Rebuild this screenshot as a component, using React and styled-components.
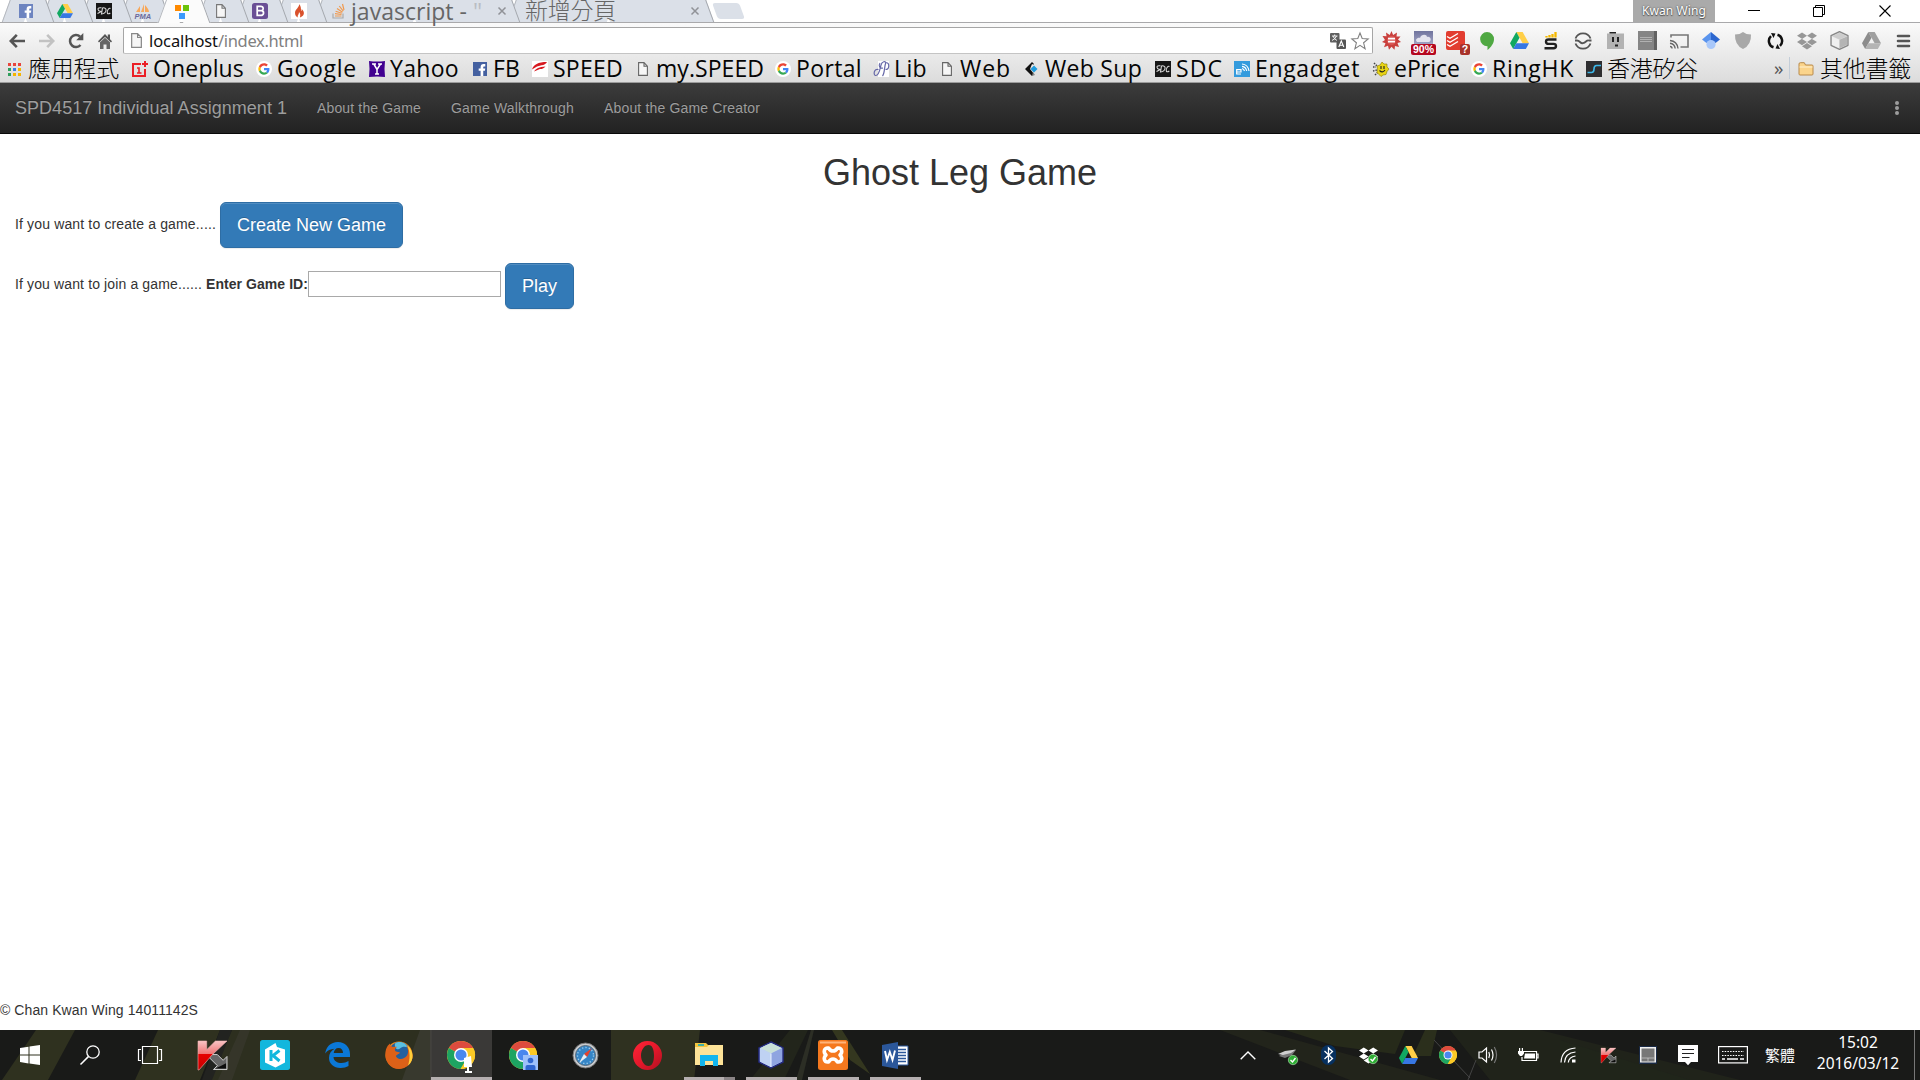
import React, { useLayoutEffect, useRef } from "react";
import styled, { createGlobalStyle, css } from "styled-components";
import { FaDropbox } from "react-icons/fa";

const UI = `"Noto Sans", "Noto Sans CJK TC", sans-serif`;
const LIGHT_UI = `"Open Sans", "Noto Sans CJK TC", sans-serif`;
const ARIAL = `"Liberation Sans", Arial, sans-serif`;

const GlobalStyle = createGlobalStyle`
  * { box-sizing: border-box; }
  html, body { margin: 0; padding: 0; background: #fff; overflow: hidden; }
  svg { display: block; flex: none; overflow: visible; }
`;

/* ---------- text spaced to a known width ---------- */

const FitSpan = styled.span`
  display: block;
  flex: none;
  white-space: pre;
`;

function Fit({ width, children, className }) {
  const ref = useRef(null);
  useLayoutEffect(() => {
    const el = ref.current;
    el.style.width = "max-content";
    el.style.letterSpacing = "0px";
    const natural = el.getBoundingClientRect().width;
    el.style.letterSpacing = `${(width - natural) / Array.from(children).length}px`;
    el.style.width = `${width}px`;
  }, [width, children]);
  return <FitSpan ref={ref} className={className}>{children}</FitSpan>;
}

/* ---------- icons ---------- */

const Svg = ({ w = 16, h = w, vb = `0 0 ${w} ${h}`, children, ...rest }) => (
  <svg width={w} height={h} viewBox={vb} fill="none" {...rest}>{children}</svg>
);

const Drive = ({ w = 16, h = 14, colors = ["#ffcf48", "#11a861", "#3777e3"] }) => (
  <Svg w={w} h={h} vb="0 0 48 42" preserveAspectRatio="none">
    <path d="M16 0h16l16 28H32z" fill={colors[0]} />
    <path d="M16 0L0 28l8 14 16-28z" fill={colors[1]} />
    <path d="M16 28h32l-8 14H8z" fill={colors[2]} />
  </Svg>
);

const Facebook = ({ fill = "#4460a0", size = 14 }) => (
  <Svg w={size} vb="0 0 16 16">
    <rect width="16" height="16" fill={fill} />
    <path d="M8.700 16V10H6.500V7.400h2.200V6c0-2.400 1.200-3.600 3.400-3.600H14V5h-1.200C12 5 11.700 5.400 11.700 6v1.400H14L13.600 10h-1.900v6z" fill="#fff" />
  </Svg>
);

const Sdc = ({ w = 16 }) => (
  <Svg w={w} vb="0 0 16 16">
    <rect width="16" height="16" fill="#161616" />
    <path d="M5.500 4.800Q1.800 4.300 2 6.300t2.300 1.900-2.800 2.400M6.500 4.800L5.500 11q4-.5 4.500-3.500t-3.500-2.700M14.500 5.500c-2-1.500-4 3.500-3 5 1 .8 2.800-.5 2.800-.5" stroke="#d8d8d8" strokeWidth="1.100" />
  </Svg>
);

const Pma = () => (
  <Svg w={18} h={16}>
    <path d="M7 9L10 1v8zM2 9l4-6v6zM11 2c2 2 4 5 4 7h-4z" fill="#f7a85b" />
    <text x="0.500" y="15.500" fontFamily={ARIAL} fontSize="7.500" fontWeight="700" fontStyle="italic" fill="#6b6a9b">PMA</text>
  </Svg>
);

const Tiles = () => (
  <Svg w={14} h={14}>
    <path d="M0 0h6v6H0z" fill="#ff8a00" />
    <path d="M8 0h6v6H8z" fill="#6cc30c" />
    <path d="M4 8h6v6H4z" fill="#3b99fc" />
  </Svg>
);

const Doc = ({ stroke = "#666", w = 10, h = 14 }) => (
  <Svg w={w} h={h} vb="0 0 10 14" preserveAspectRatio="none">
    <path d="M.6.6h5.400L9.400 4.200v9.200H.6zM6 .6v3.600h3.400" stroke={stroke} strokeWidth="1.100" fill="#f6f6f6" />
  </Svg>
);

const BootstrapIcon = () => (
  <Svg w={16}>
    <rect width="16" height="16" rx="2.500" fill="#6a4f95" />
    <path d="M5.200 3.400h3.600c3 0 3 3.500 1 4.200 2.600.8 2.400 4.800-1.200 4.800H5.200zM5.800 7.700h3" stroke="#fff" strokeWidth="1.700" />
  </Svg>
);

const Flame = () => (
  <Svg w={16}>
    <rect width="16" height="16" fill="#fff" />
    <path d="M8 1c1 3-4 5-4 9 0 3 2 4 3 4.500C6 12 8 12 8 9c2 2 1 4 1 5.500 6-2 4-7 1.500-8.500.5 1 0 2-.5 2C10 5 10 3 8 1z" fill="#d9512c" />
  </Svg>
);

const Stack = () => (
  <Svg w={13} h={15}>
    <path d="M1 9.500V14h10V9.500" stroke="#aaa" strokeWidth="1.200" />
    <path d="M3 12h6.500M3 9.700l6.500.8M3.600 7.200l6.200 2M5 4.500l5.500 3.700M7.300 2l4 5.200M10.500 0l1.500 6" stroke="#f09a50" strokeWidth="1.200" />
  </Svg>
);

const Apps = () => {
  const colors = ["#e8453c", "#e8453c", "#e8453c", "#2f9e5b", "#3b7de8", "#f5b400", "#2f9e5b", "#f5b400", "#f5b400"];
  return (
    <Svg w={13}>
      {colors.map((c, i) => <rect key={i} x={(i % 3) * 5} y={Math.floor(i / 3) * 5} width="3" height="3" fill={c} />)}
    </Svg>
  );
};

const OneplusIcon = () => (
  <Svg w={16}>
    <path d="M9 3H1v12h12V8M13 0v6M10 3h6" stroke="#eb1f25" strokeWidth="2" />
    <path d="M5 7h2v5M5 12h4.500" stroke="#eb1f25" strokeWidth="1.600" />
  </Svg>
);

const GoogleG = () => (
  <Svg w={16} vb="0 0 48 48">
    <circle cx="24" cy="24" r="24" fill="#fff" />
    <g transform="translate(7 7) scale(.71)">
      <path fill="#EA4335" d="M24 9.500c3.540 0 6.710 1.220 9.210 3.600l6.850-6.850C35.900 2.380 30.470 0 24 0 14.620 0 6.510 5.380 2.560 13.220l7.980 6.190C12.430 13.720 17.740 9.500 24 9.500z" />
      <path fill="#4285F4" d="M46.980 24.550c0-1.570-.15-3.090-.38-4.550H24v9.020h12.940c-.58 2.960-2.260 5.480-4.780 7.180l7.730 6c4.510-4.180 7.090-10.360 7.090-17.650z" />
      <path fill="#FBBC05" d="M10.530 28.590A14.500 14.500 0 0 1 9.770 24c0-1.600.27-3.140.76-4.590l-7.980-6.190A24 24 0 0 0 0 24c0 3.880.92 7.540 2.560 10.780z" />
      <path fill="#34A853" d="M24 48c6.480 0 11.930-2.130 15.890-5.810l-7.730-6c-2.150 1.450-4.920 2.300-8.160 2.300-6.260 0-11.570-4.220-13.470-9.910l-7.980 6.190C6.510 42.620 14.620 48 24 48z" />
    </g>
  </Svg>
);

const YahooIcon = () => (
  <Svg w={16}>
    <path d="M0 0q8 1 16 0-1 8 0 16-8-1-16 0 1-8 0-16z" fill="#400090" />
    <path d="M3 3h4M9 3h4M4.800 3L8 8.500 11.500 3M8 8v5M6 13h4" stroke="#fff" strokeWidth="1.500" />
  </Svg>
);

const SpeedIcon = () => (
  <Svg w={16}>
    <rect width="16" height="16" fill="#fff" />
    <path d="M0 8.500C1.500 3.500 6 1 15 1c-1 2-3 3-5.500 3.300L5 5.500zM2 10.500c2-3 5-4.500 11.500-5-2 2-3 2.500-5.500 2.500z" fill="#d71920" />
  </Svg>
);

const LibIcon = () => (
  <Svg w={16}>
    <rect x="5" width="11" height="16" fill="#fff" />
    <path d="M5.500 8.500C1 7 0 14 2.500 14.500 6 15 7 8 8 4c1-4 4.500-4 5-2M9.500 15c2.500-3 1.500-9 3.500-14M7 2c-2 3 0 6 3 5M12.500 8.500c4 0 4.500-6.500.5-7" stroke="#6668a8" strokeWidth="1.200" />
  </Svg>
);

const WebSupIcon = () => (
  <Svg w={14} h={16}>
    <path d="M7 1L0 8l7 7 2-2-4-5 4-5z" fill="#111" />
    <path d="M7 15l3-1-2-3z" fill="#888" />
    <path d="M9 4.500L12.500 8 9 11.500 5.500 8z" fill="#1f9de0" />
    <path d="M9 4L5 8l2-5z" fill="#eee" />
  </Svg>
);

const EngadgetIcon = () => (
  <Svg w={16}>
    <rect width="16" height="16" fill="#349bdd" />
    <path d="M2.500 11H7V8.700H2.700V13H7M8 7.500q2 .3 2.500 2.500M8 5.300q4 .5 4.700 4.700M8 3q6 .5 7 7" stroke="#fff" strokeWidth="1.200" />
  </Svg>
);

const EpriceIcon = () => (
  <Svg w={16}>
    <path d="M1 2l4 4M0 6h3M0 10l4-1M2 14l3-3" stroke="#444" strokeWidth="1.500" strokeDasharray="1.500 1" />
    <path d="M9 1l2 2 3 0 0 3 2 2-2 2.500-1 3-3 .5-2 1.500-2-2-2-2 .5-3L4 5l3-1z" fill="#e8d414" stroke="#8a7a00" strokeWidth=".6" />
    <path d="M8 5v3M11 5v3M6.500 9.500q3 3 5.500-.5" stroke="#222" strokeWidth="1.100" />
  </Svg>
);

const RingIcon = () => (
  <Svg w={16}>
    <rect width="16" height="16" fill="#2e2e30" />
    <path d="M1.500 11.500h4Q8 11.500 8 8t2.500-3.500H15" stroke="#3db7e8" strokeWidth="1.600" />
  </Svg>
);

const FolderIcon = () => (
  <Svg w={16} h={14}>
    <path d="M1 12V2q0-1.300 1.300-1.300h4L7.500 3H14q1 0 1 1v8q0 1-1 1H2q-1 0-1-1z" fill="#fbd48b" stroke="#b98a4a" />
    <path d="M1.500 5h13" stroke="#fff0cf" />
  </Svg>
);

const BackIcon = ({ color }) => (
  <Svg w={16} h={14}><path d="M7.800.8L1.800 7l6 6.200M2 7h14" stroke={color} strokeWidth="2.600" /></Svg>
);
const ForwardIcon = ({ color }) => (
  <Svg w={16} h={14}><path d="M8.200.8l6 6.200-6 6.200M14 7H0" stroke={color} strokeWidth="2.600" /></Svg>
);
const ReloadIcon = () => (
  <Svg w={16}>
    <path d="M12.500 12A6 6 0 1 1 12 3.500" stroke="#555" strokeWidth="2.500" />
    <path d="M15.300 0v7.200H8.200z" fill="#555" />
  </Svg>
);
const HomeIcon = () => (
  <Svg w={14} h={16}>
    <path d="M7 1L0 8.300l1 1.200L7 4l6 5.500 1-1.200-2-2V1.500H9.800V4z" fill="#555" />
    <path d="M2 9.300l5-4.600 5 4.600V16H8.500v-4.500h-3V16H2z" fill="#666" />
  </Svg>
);

const Translate = () => (
  <Svg w={16}>
    <rect width="9.500" height="9.500" rx="1" fill="#606060" />
    <rect x="6.500" y="6.500" width="9.500" height="9.500" rx="1" fill="#555" />
    <path d="M2 3h5.500M4.700 1.500V3M6.500 3q-1 3-4.500 4.500M3 3q1 3 4 4.500" stroke="#fff" strokeWidth=".9" />
    <path d="M8.800 14l2.500-6 2.500 6M9.500 12.300h3.600" stroke="#fff" strokeWidth="1.100" />
  </Svg>
);
const StarIcon = () => (
  <Svg w={18}>
    <path d="M9 1l2.200 5.500 6 .4-4.600 3.900 1.500 5.900L9 13.400l-5.100 3.300 1.500-5.900L.8 6.900l6-.4z" stroke="#808080" strokeWidth="1.100" fill="#fff" />
  </Svg>
);
const Burst = () => (
  <Svg w={19}>
    <path d="M9.500 0l1.600 4L15 1.500l-.5 4 4 0-2.500 3L19 11l-3.500 1 1.500 4-4-1-.5 3.800-3-3-2.500 3-1-4-4 1.500 1.500-4L0 11l3-2L.5 5l4 .3L4 1.500 7.700 4z" fill="#c9403d" />
    <circle cx="9.500" cy="9.500" r="4.500" fill="#d95754" />
    <path d="M6 7.700h7M6 10.700h7" stroke="#fff" strokeWidth="1.700" />
  </Svg>
);
const Cloud = () => (
  <Svg w={19}>
    <defs><linearGradient id="sky" x2="0" y2="1"><stop stopColor="#70749e" /><stop offset="1" stopColor="#b6b8d2" /></linearGradient></defs>
    <rect width="19" height="19" fill="url(#sky)" />
    <path d="M3 11c-3-3 2-5 3-4 1-4 7-4 7-1 4-1 5 4 2 5z" fill="#e4e4ee" />
  </Svg>
);
const Todoist = () => (
  <Svg w={19}>
    <rect width="19" height="19" rx="2" fill="#e23d30" />
    <path d="M1 5.500l3 1.800L12 2.500M1 9.500l3 1.800L12 6.500M1 13.500l3 1.800 8-4.800" stroke="#fff" strokeWidth="1.400" />
  </Svg>
);
const Hangouts = () => (
  <Svg w={14} h={18}><path d="M7 0a7 7 0 0 1 7 7.300c0 4-3 8-6.500 10.700v-3.800A7 7 0 0 1 7 0z" fill="#4fa842" /></Svg>
);
const SIcon = () => (
  <Svg w={14} h={18}>
    <path d="M12.500 7.500H4.500q-2.500 0-2.500 2.200t2.500 2.200h5q2.500 0 2.500 2.200t-2.500 2.200H.5" stroke="#222" strokeWidth="2.400" />
    <path d="M2.500 5.500V4M5.500 5.500V3M8.500 5.500V2M11.500 5.500V0" stroke="#f5b800" strokeWidth="2.300" />
  </Svg>
);
const WaveCircle = () => (
  <Svg w={18}>
    <path d="M1.500 6.500A8 8 0 0 1 16.500 6.500M1.500 11.500A8 8 0 0 0 16.500 11.500" stroke="#555" strokeWidth="1.800" />
    <path d="M1 8.500h2q1.500 0 3 1.500t3 1.200 3-1.700 3-1h2.500" stroke="#555" strokeWidth="1.800" />
  </Svg>
);
const Face = () => (
  <Svg w={17}>
    <rect y="1.500" width="17" height="15.500" fill="#b2b2b2" />
    <path d="M2.500 1.500V0H9v1.500M5 5h2v5H5zM10 5h2v5h-2zM8 12.500h3v2H8z" fill="#222" />
  </Svg>
);
const GreyKeys = () => (
  <Svg w={19}>
    <rect width="19" height="19" fill="#858585" />
    <rect x="16" width="3" height="19" fill="#626262" />
    <path d="M2.500 6.500h11M2.500 8.500h11M2.500 10.500h11" stroke="#ddd" strokeWidth="1.100" strokeDasharray="1 1" />
  </Svg>
);
const Cast = () => (
  <Svg w={19} h={16}>
    <path d="M1 4.500V2h17v12h-7.500" stroke="#757575" strokeWidth="1.600" />
    <path d="M0 7.500q7 .5 8 8M0 10.300q4.500.5 5.200 5.200M0 13.500q2 0 2 2" stroke="#666" strokeWidth="1.400" />
  </Svg>
);
const Scholar = () => (
  <Svg w={18}>
    <path d="M9 0L0 7.500 4.500 11 9 8.500z" fill="#5a94ee" />
    <path d="M9 0l9 7.500-4.500 3.500L9 8.500z" fill="#2d67cf" />
    <circle cx="9" cy="12.500" r="4.600" fill="#a9c8fa" />
  </Svg>
);
const Shield = () => (
  <Svg w={16} h={17}><path d="M8 0q3 2.500 8 2.500Q16.500 13 8 17-.5 13 0 2.500 5 2.500 8 0z" fill="#a8a8a8" /></Svg>
);
const Sync = () => (
  <Svg w={17} h={18}>
    <path d="M6.500 15.300A6.600 6.600 0 0 1 4 4.200M10.500 2.700A6.600 6.600 0 0 1 13 13.800" stroke="#111" strokeWidth="2.500" />
    <path d="M4 1l4.500.5L6.500 6zM13 17l-4.500-.5L10.500 12z" fill="#111" />
  </Svg>
);
const Cube = () => (
  <Svg w={19} h={19}>
    <path d="M9.500.7l8.500 4v9.600l-8.500 4-8.500-4V4.700z" fill="#ddd" stroke="#868686" strokeWidth="1.300" strokeLinejoin="round" />
    <path d="M9.500 8.800L2 5.500v8.300l7.500 3.400z" fill="#f0f0f0" />
    <path d="M9.500 8.800L17 5.500v8.300l-7.500 3.400z" fill="#b4b4b4" />
    <path d="M9.500 1.800L2.500 5.200l7 3.200 7-3.200z" fill="#cdcdcd" />
  </Svg>
);
const MenuIcon = () => (
  <Svg w={13} h={14}><path d="M1 2h11M1 7h11M1 12h11" stroke="#555" strokeWidth="2.600" strokeLinecap="round" /></Svg>
);

const ChromeLogo = ({ size }) => (
  <Svg w={size} vb="0 0 48 48">
    <circle cx="24" cy="24" r="24" fill="#fbc926" />
    <path d="M24 24L3.200 12A24 24 0 0 1 44.800 12z" fill="#dd4b3e" />
    <path d="M3.200 12A24 24 0 0 0 23 48l11-18-10-6z" fill="#1da462" />
    <path d="M24 12h20.800A24 24 0 0 1 24 48l10.400-18z" fill="#fbc926" />
    <circle cx="24" cy="24" r="12" fill="#fff" />
    <circle cx="24" cy="24" r="9.500" fill="#4a87ee" />
  </Svg>
);

const StartIcon = () => (
  <Svg w={20}><path d="M0 3l8.500-1.300V9.500H0zM9.500 1.500L20 0v9.500H9.500zM0 10.500h8.500v7.900L0 17zM9.500 10.500H20V20l-10.500-1.500z" fill="#fff" /></Svg>
);
const SearchIcon = () => (
  <Svg w={20}><circle cx="13" cy="7" r="6.200" stroke="#fff" strokeWidth="1.300" /><path d="M8.600 11.400L.5 19.500" stroke="#fff" strokeWidth="1.500" /></Svg>
);
const TaskViewIcon = () => (
  <Svg w={24} h={18}><path d="M4.500.5h15v17h-15zM3 3.500H.5v11H3M21 3.500h2.500v11H21" stroke="#fff" strokeWidth="1.200" /></Svg>
);
const KLogo = ({ size = 29 }) => (
  <Svg w={size} vb="0 0 30 30">
    <defs><linearGradient id="kred" x2="0" y2="1"><stop stopColor="#f8c4c4" /><stop offset=".45" stopColor="#ef7474" /><stop offset=".46" stopColor="#e60000" /><stop offset="1" stopColor="#c40000" /></linearGradient></defs>
    <path d="M13 14h7l6 6 4-4v13.500H16l4-4-8-8z" fill="#666" stroke="#d0d0d0" strokeWidth="1" />
    <path d="M18 28.500h11V23l-5 2.500z" fill="#0c0c0c" />
    <path d="M0 0h9v9l9-9h12L15 14 1 30H0z" fill="url(#kred)" stroke="#f5b5b5" strokeWidth=".6" />
  </Svg>
);
const KkBox = () => (
  <Svg w={30}>
    <rect width="30" height="30" rx="2.500" fill="#12b7dd" />
    <path d="M15.500 3L17 7l8 2.500v13l-9.500 5L5 22.500v-13z" fill="#fff" />
    <path d="M11 10v11M19.500 10.500l-6.500 5 6.500 5.500" stroke="#12b7dd" strokeWidth="3" />
  </Svg>
);
const EdgeLogo = () => (
  <Svg w={25} h={26} vb="0 0 25 26">
    <path d="M.2 11.500C1 5 5.500 0 13 0c7 0 12 5 12 12v3H8.500c.2 4 4 6 8 6 2.500 0 5-.8 7-2v5c-2 1.300-5 2-8 2C8.500 26 4 21.500 4 16c0-4 2-7.300 5.500-9.200C5.500 7 2 8.500.2 11.500zM8.700 11H18c0-3-1.500-5-4.500-5-2.700 0-4.300 2-4.800 5z" fill="#0b78d7" fillRule="evenodd" />
  </Svg>
);
const Firefox = () => (
  <Svg w={28}>
    <circle cx="14" cy="14" r="13.500" fill="#f08a1c" />
    <circle cx="14.500" cy="11.500" r="10.500" fill="#23609f" />
    <path d="M10 2.500c5-3.500 11-.5 13 4-3-1-6-1-8 1-2 2-6 0-5-5z" fill="#5abfe0" />
    <path d="M.5 12C.7 7 3 4 5 2.500c0 2 1 3 3 3.500 2-.5 3-.5 4 0-2 1-3 3-1 4.500l4 1c-1 2-4 2-4 4 3 4 8 3 11-1 2-3 1-8-1-10 5 3 7 8 6.500 12C26 24 20 28 14 28 5 28-.5 20 .5 12z" fill="#dd6118" />
    <path d="M22 4.500c7 5 7.500 15 1 20 2-6 2.500-14-1-20z" fill="#ffcf3a" />
  </Svg>
);
const Mic = () => <Svg w={10} h={18}><path d="M1 2l7-2 1 11H6v4h3v2H2v-2h2v-4H1z" fill="#fff" /></Svg>;
const Person = () => (
  <Svg w={15}><rect width="15" height="15" fill="#9dc0fa" /><circle cx="7.500" cy="5.500" r="2.800" fill="#2f66d0" /><path d="M2.500 15v-3q0-2 2-2h6q2 0 2 2v3z" fill="#2f66d0" /></Svg>
);
const Safari = () => (
  <Svg w={27}>
    <circle cx="13.500" cy="13.500" r="12.500" fill="#c9cccf" stroke="#777" />
    <circle cx="13.500" cy="13.500" r="10" fill="#3585c6" stroke="#5b6b78" />
    <circle cx="13.500" cy="13.500" r="8" stroke="#a6d4ee" strokeWidth="1.300" strokeDasharray="1.200 2.200" />
    <path d="M20 6l-5 9-3-3z" fill="#e4432d" />
    <path d="M7 21l5-9 3 3z" fill="#e9eef2" />
  </Svg>
);
const Opera = () => (
  <Svg w={29}>
    <defs><linearGradient id="op" x2="1" y2="1"><stop stopColor="#ff2537" /><stop offset=".5" stopColor="#e5182b" /><stop offset="1" stopColor="#b01020" /></linearGradient></defs>
    <path fillRule="evenodd" d="M14.500 0a14.500 14.500 0 1 0 0 29 14.500 14.500 0 0 0 0-29zm1 4c4 0 5.500 5 5.500 10.500S19.500 25 15.500 25 8 20 8 14.500 11.500 4 15.500 4z" fill="url(#op)" />
  </Svg>
);
const Explorer = () => (
  <Svg w={28} h={24}>
    <path d="M0 0h11l2 2h14v20H0z" fill="#f3c53f" />
    <path d="M0 4h12l2-2h14v20H0z" fill="#fde398" />
    <path d="M3 1h6v2H3z" fill="#3fb0a8" />
    <path d="M5 23V12h18v11h-5v-5h-8v5z" fill="#12b5ee" />
  </Svg>
);
const NetBeans = () => (
  <Svg w={26} h={28}>
    <path d="M13 1l12 6v14l-12 6L1 21V7z" fill="#b9cdf0" stroke="#232a80" strokeWidth="1.500" />
    <path d="M13 2l11 5-11 5.500L2 7z" fill="#c9e0d8" />
    <path d="M13 12.500L24 7v13.500L13 26z" fill="#8fa4e0" />
    <path d="M13 12.500L2 7v13.500L13 26z" fill="#bfd2f3" />
    <path d="M13 12.500V26" stroke="#e9f0ff" />
  </Svg>
);
const Xampp = () => (
  <Svg w={30}>
    <rect width="30" height="30" rx="2.500" fill="#f5781e" />
    <path d="M2 2.500h26" stroke="#ffb47a" strokeWidth="2" />
    <path d="M10.500 8c-4.500-.5-5.500 4-2.500 7-3 3-2 7.500 2.500 7 1.500-2.500 2.500-3 4.500-3s3 .5 4.500 3c4.500.5 5.500-4 2.500-7 3-3 2-7.500-2.500-7-1.500 2.500-2.500 3-4.500 3s-3-.5-4.500-3z" stroke="#fff" strokeWidth="3.600" strokeLinejoin="round" />
  </Svg>
);
const Word = () => (
  <Svg w={27} h={27}>
    <path d="M14 4h12v19H14z" fill="#fff" stroke="#2b579a" />
    <path d="M16 7.500h8M16 10.500h8M16 13.500h8M16 16.500h8M16 19.500h8" stroke="#2b579a" strokeWidth="1.300" />
    <path d="M0 3l16-3v27L0 24z" fill="#2b579a" />
    <path d="M3 9l2 9 2.800-8L10.500 18l2.500-9.500" stroke="#fff" strokeWidth="1.900" />
  </Svg>
);

const Check = () => (
  <Svg w={10}><circle cx="5" cy="5" r="4.700" fill="#2fae35" stroke="#b8e6b8" strokeWidth=".6" /><path d="M2.500 5l2 2 3-4" stroke="#fff" strokeWidth="1.400" /></Svg>
);
const Chevron = () => <Svg w={16} h={9}><path d="M.7 8.300L8 1l7.300 7.300" stroke="#fff" strokeWidth="1.400" /></Svg>;
const Usb = () => (
  <Svg w={20} h={14}><path d="M1 8l7-4 10-2-4 5-7 3z" fill="#777" /><path d="M0 6l7-3 11-1.500-5 3.500-8 2z" fill="#cfcfcf" /></Svg>
);
const Bluetooth = () => (
  <Svg w={15} h={20}><rect width="15" height="20" rx="7.500" fill="#06305f" /><path d="M3.500 6l8 7.500L7.500 17V3l4 3.500-8 7.500" stroke="#fff" strokeWidth="1.300" /></Svg>
);
const Volume = () => (
  <Svg w={20} h={18}>
    <path d="M1 6h3l4.500-4v14L4 12H1z" stroke="#fff" strokeWidth="1.200" />
    <path d="M10.800 6q1.500 3 0 6M13.500 3.500q3 5.500 0 11" stroke="#fff" strokeWidth="1.200" /><path d="M16.300 1q4.500 8 0 16" stroke="#777" strokeWidth="1.200" />
  </Svg>
);
const Battery = () => (
  <Svg w={21} h={15}>
    <path d="M6 3.500h12.500v9H4V9M18.500 6H20v4h-1.500" stroke="#fff" strokeWidth="1.200" />
    <path d="M7 5.500h10v5H6z" fill="#fff" /><path d="M0 3h6v2.500L4 8H2L0 5.500zM1 0h1.200v3H1zM3.800 0H5v3H3.800z" fill="#fff" />
  </Svg>
);
const Wifi = () => (
  <Svg w={16}>
    <path d="M1 15.500Q1.500 2 15.500 1" stroke="#fff" strokeWidth="1.200" />
    <path d="M4.500 15.500q.5-9.500 11-10.500M8.300 15.500q.5-5.500 7.200-6.500" stroke="#fff" strokeWidth="1.200" /><path d="M12 12.500h3.500v3H12z" fill="#fff" />
  </Svg>
);
const Device = () => (
  <Svg w={18} h={18}>
    <rect width="18" height="18" fill="#1a2a45" /><rect x="1" y="1" width="16" height="15.500" fill="#f0f0f0" />
    <rect x="2.500" y="2.500" width="13" height="13" fill="#777" /><path d="M2.500 12h13M9 12v3" stroke="#ddd" strokeWidth=".6" />
  </Svg>
);
const Notice = () => (
  <Svg w={20}>
    <path d="M0 0h20v17h-7l-3 3.300L7 17H0z" fill="#fff" /><path d="M4 4.500h12M4 8.500h12M4 12.500h7.500" stroke="#222" strokeWidth="1.100" />
  </Svg>
);
const Keyboard = () => (
  <Svg w={30} h={18}>
    <rect x=".6" y=".6" width="28.800" height="16.300" stroke="#fff" strokeWidth="1.200" />
    <path d="M4 5.500h22M4 9.500h22" stroke="#fff" strokeWidth="1.200" strokeDasharray="1.500 1.200" /><path d="M4 13h3M9 13h11M22 13h4" stroke="#fff" strokeWidth="1.300" />
  </Svg>
);

/* ---------- browser frame ---------- */

const Screen = styled.div`
  width: 1920px;
  height: 1080px;
  display: flex;
  flex-direction: column;
  background: #fff;
  overflow: hidden;
`;

const TabStrip = styled.div`
  height: 23px;
  display: flex;
  align-items: flex-start;
  padding-left: 2px;
  background: #fff;
  border-bottom: 1px solid #a9a9ab;
  isolation: isolate;
`;

const slope = css`
  content: "";
  position: absolute;
  top: -1px;
  bottom: 0;
  z-index: -1;
  background: ${(p) => (p.$active ? "#fbfbfb" : "#dbe0e8")};
`;

const TabBox = styled.div`
  position: relative;
  z-index: ${(p) => p.$z};
  isolation: isolate;
  flex: none;
  width: ${(p) => p.$w}px;
  height: ${(p) => (p.$active ? 23 : 22)}px;
  margin-right: -12px;
  padding: 0 19px 0 ${(p) => (p.$wide ? 18 : 16)}px;
  display: flex;
  align-items: center;
  justify-content: ${(p) => (p.$wide ? "flex-start" : "center")};
  color: #666;
  font: 23px/22px ${LIGHT_UI};
  &::before { ${slope} left: 4px; right: 50%; transform: skewX(-20deg); border-left: 1px solid #b4b7bd; }
  &::after { ${slope} right: 4px; left: calc(50% - 5px); transform: skewX(20deg); border-right: 1px solid #a4a7ad; }
`;

const TabTitle = styled.div`
  flex: none;
  display: flex;
  margin-left: ${(p) => p.$ml || 0}px;
  margin-top: ${(p) => p.$mt || 0}px;
  font-weight: ${(p) => p.$weight || 400};
`;

const Faint = styled(Fit)`color: #b9bcc2;`;

const CloseX = styled.span`
  margin-left: auto;
  margin-right: ${(p) => p.$mr || 0}px;
`;

const NewTab = styled.div`
  width: 27px;
  height: 16px;
  margin: 3px 0 0 13px;
  background: #dbe0e8;
  transform: skewX(20deg);
  border-radius: 3px;
`;

const WindowControls = styled.div`
  margin-left: auto;
  display: flex;
  height: 22px;
`;

const Profile = styled.div`
  width: 82px;
  margin-right: 5px;
  background: #aaa;
  color: #fff;
  font: 12px/22px ${UI};
  display: flex;
  justify-content: center;
  text-shadow: 0 0 2px #444, 0 1px 1px #555;
`;

const ControlButton = styled.div`
  width: ${(p) => p.$w}px;
  display: flex;
  align-items: center;
  justify-content: center;
`;

const Toolbar = styled.div`
  height: 60px;
  border-bottom: 1px solid #9c9c9c;
  background: linear-gradient(#fafafa, #dcdcdc);
  display: flex;
  flex-direction: column;
`;

const AddressRow = styled.div`
  height: 35px;
  display: flex;
  align-items: center;
`;

const NavButton = styled.div`
  width: ${(p) => p.$w}px;
  display: flex;
  justify-content: center;
  flex: none;
`;

const AddressBar = styled.div`
  width: 1250px;
  height: 27px;
  margin-left: 6px;
  margin-right: 2px;
  padding: 0 3px 0 7px;
  border: 1px solid #a6a6a6;
  border-bottom-color: #c4c4c4;
  border-radius: 2px;
  background: #fff;
  display: flex;
  align-items: center;
  font: 16.500px/24px ${UI};
  color: #111;
`;

const Host = styled(Fit)`margin-left: 7px;`;
const Path = styled(Fit)`color: #808080;`;
const AddressTail = styled.div`
  margin-left: auto;
  display: flex;
  align-items: center;
  gap: 5px;
`;

const Extension = styled.div`
  position: relative;
  width: 32px;
  height: 35px;
  display: flex;
  align-items: center;
  justify-content: center;
`;

const ExtBadge = styled.span`
  position: absolute;
  left: ${(p) => p.$x}px;
  top: 21px;
  width: ${(p) => p.$w}px;
  height: 11px;
  border-radius: 2px;
  background: ${(p) => p.$bg};
  color: #fff;
  font: 700 10.500px/11px ${ARIAL};
  text-align: center;
`;

const BookmarkBar = styled.div`
  height: 24px;
  padding: 0 0 4px 6px;
  display: flex;
  align-items: center;
  color: #050505;
  font: 23px/24px ${LIGHT_UI};
`;

const BookmarkItem = styled.div`
  flex: none;
  width: ${(p) => p.$w}px;
  display: flex;
  align-items: center;
  font-weight: ${(p) => (p.$cjk ? 300 : 400)};
`;

const BookmarkIcon = styled.span`
  width: 16px;
  margin: 2px ${(p) => p.$gap}px 0 0;
  display: flex;
  justify-content: center;
  flex: none;
`;

const BookmarkLabel = styled(Fit)`
  margin-top: -1px;
`;

const Overflow = styled.span`
  width: 24px;
  margin-left: 72px;
  color: #555;
  font-size: 19px;
  display: flex;
  justify-content: flex-start;
`;

const Separator = styled.span`
  width: 1px;
  height: 22px;
  margin: 0 8px 0 -9px;
  background: #c3cdd8;
`;

/* ---------- web page ---------- */

const Page = styled.main`
  height: 947px;
  display: flex;
  flex-direction: column;
  background: #fff;
  color: #333;
  font: 14px/20px ${ARIAL};
`;

const Navbar = styled.nav`
  flex: none;
  height: 51px;
  display: flex;
  align-items: center;
  padding: 0 21px 0 0;
  background: linear-gradient(#3c3c3c, #222);
  border-bottom: 1px solid #080808;
  color: #9d9d9d;
  text-shadow: 0 -1px 0 rgba(0, 0, 0, 0.25);
`;

const Brand = styled.a`
  padding: 0 15px;
  font-size: 18px;
`;

const NavLink = styled.a`
  padding: 0 15px;
`;

const More = styled.div`
  margin-left: auto;
  display: flex;
  flex-direction: column;
  gap: 1px;
  i { width: 4px; height: 4px; border-radius: 2px; background: #9d9d9d; }
`;

const Title = styled.h1`
  margin: 19px 0 9px;
  text-align: center;
  font-size: 36px;
  font-weight: 400;
  line-height: 40px;
`;

const FormRow = styled.div`
  padding-left: 15px;
  height: 46px;
  margin-bottom: 15px;
  display: flex;
  align-items: center;
`;

const Prompt = styled(Fit)`
  margin: 0 4px ${(p) => p.$lift || 2}px 0;
`;

const Label = styled(Fit)`
  margin-bottom: 4px;
  font-weight: 700;
`;

const Button = styled.button`
  height: 46px;
  padding: 0 16px;
  border: 1px solid #2e6da4;
  border-radius: 6px;
  background: #337ab7;
  color: #fff;
  font: 18px/24px ${ARIAL};
  text-shadow: 0 -1px 0 rgba(0, 0, 0, 0.2);
  box-shadow: inset 0 1px 0 rgba(255, 255, 255, 0.15), 0 1px 1px rgba(0, 0, 0, 0.075);
`;

const GameInput = styled.input`
  width: 193px;
  height: 26px;
  margin: 0 4px 4px 0;
  padding: 1px 2px;
  border: 1px solid #a9a9a9;
  background: #fff;
  font: 14px/20px ${ARIAL};
`;

const Footer = styled.footer`
  margin-top: auto;
  padding-bottom: 10px;
`;

/* ---------- taskbar ---------- */

const Taskbar = styled.div`
  position: relative;
  isolation: isolate;
  height: 50px;
  display: flex;
  background: #191a18;
`;

const Wallpaper = styled.svg`
  position: absolute;
  inset: 0;
  z-index: -1;
`;

const TaskCell = styled.div`
  position: relative;
  width: ${(p) => p.$w || 62}px;
  height: 50px;
  display: flex;
  align-items: center;
  justify-content: center;
  background: ${(p) => (p.$active ? "rgba(70,68,66,.75)" : "transparent")};
`;

const Running = styled.span`
  position: absolute;
  bottom: 0;
  left: ${(p) => p.$l}px;
  width: ${(p) => p.$w}px;
  height: 3px;
  background: ${(p) => (p.$dim ? "#8a8486" : "#b5afb0")};
`;

const Overlay = styled.span`
  position: absolute;
  left: ${(p) => p.$x}px;
  top: ${(p) => p.$y}px;
`;

const Tray = styled.div`
  margin-left: auto;
  display: flex;
  color: #fff;
`;

const Ime = styled.div`
  width: 44px;
  text-align: center;
  font: 400 15px/50px "Noto Sans CJK TC", sans-serif;
`;

const Clock = styled.div`
  width: 112px;
  padding-top: 2px;
  display: flex;
  flex-direction: column;
  align-items: center;
  font: 15.500px/21px ${UI};
`;

const ShowDesktop = styled.div`
  width: 6px;
  border-left: 1px solid #777;
`;

const smallTabs = [
  <Facebook fill="#6d84c0" />, <Drive />, <Sdc />, <Pma />, <Tiles />, <Doc stroke="#777" />, <BootstrapIcon />, <Flame />,
];

const bookmarks = [
  { icon: <Apps />, label: "應用程式", w: 126, t: 91, cjk: true, gap: 6 },
  { icon: <OneplusIcon />, label: "Oneplus", w: 124, t: 91 },
  { icon: <GoogleG />, label: "Google", w: 113, t: 80 },
  { icon: <YahooIcon />, label: "Yahoo", w: 103, t: 69 },
  { icon: <Facebook />, label: "FB", w: 60, t: 27 },
  { icon: <SpeedIcon />, label: "SPEED", w: 103, t: 70 },
  { icon: <Doc />, label: "my.SPEED", w: 140, t: 108 },
  { icon: <GoogleG />, label: "Portal", w: 98, t: 66 },
  { icon: <LibIcon />, label: "Lib", w: 66, t: 33 },
  { icon: <Doc />, label: "Web", w: 85, t: 51 },
  { icon: <WebSupIcon />, label: "Web Sup", w: 131, t: 97 },
  { icon: <Sdc />, label: "SDC", w: 79, t: 47 },
  { icon: <EngadgetIcon />, label: "Engadget", w: 139, t: 105 },
  { icon: <EpriceIcon />, label: "ePrice", w: 98, t: 66 },
  { icon: <GoogleG />, label: "RingHK", w: 115, t: 82 },
  { icon: <RingIcon />, label: "香港矽谷", w: 116, t: 91, cjk: true, gap: 5 },
];

const extensions = [
  <Burst />,
  <><Cloud /><ExtBadge $x={4} $w={25} $bg="#b5071f">90%</ExtBadge></>,
  <><Todoist /><ExtBadge $x={21} $w={10} $bg="#a8322a">?</ExtBadge></>,
  <Hangouts />,
  <Drive w={19} h={17} />,
  <SIcon />,
  <WaveCircle />,
  <Face />,
  <GreyKeys />,
  <Cast />,
  <Scholar />,
  <Shield />,
  <Sync />,
  <FaDropbox size={20} color="#979797" />,
  <Cube />,
  <Drive w={19} h={17} colors={["#a0a0a0", "#8c8c8c", "#b4b4b4"]} />,
  <MenuIcon />,
];

const tray = [
  <Chevron />,
  <><Usb /><Overlay $x={20} $y={25}><Check /></Overlay></>,
  <Bluetooth />,
  <><FaDropbox size={19} /><Overlay $x={20} $y={24}><Check /></Overlay></>,
  <Drive w={19} h={18} />,
  <ChromeLogo size={18} />,
  <Volume />,
  <Battery />,
  <Wifi />,
  <KLogo size={15} />,
  <Device />,
  <Notice />,
];

const XMark = () => <Svg w={8}><path d="M.5.500l7 7M7.500.500l-7 7" stroke="#909297" strokeWidth="1.500" /></Svg>;

function BrowserFrame() {
  return (
    <>
      <TabStrip>
        {smallTabs.map((icon, i) => (
          <TabBox key={i} $w={51} $active={i === 4} $z={i === 4 ? 20 : 12 - i}>{icon}</TabBox>
        ))}
        <TabBox $w={206} $wide $z={3}>
          <Stack />
          <TabTitle $ml={6} $mt={-1}><Fit width={122}>javascript - </Fit><Faint width={10}>"</Faint></TabTitle>
          <CloseX $mr={-5}><XMark /></CloseX>
        </TabBox>
        <TabBox $w={206} $wide $z={2}>
          <TabTitle $ml={-1} $mt={-3} $weight={300}><Fit width={91}>新增分頁</Fit></TabTitle>
          <CloseX $mr={-4}><XMark /></CloseX>
        </TabBox>
        <NewTab />
        <WindowControls>
          <Profile><Fit width={64}>Kwan Wing</Fit></Profile>
          <ControlButton $w={68}><Svg w={12}><path d="M0 5.500h12" stroke="#000" /></Svg></ControlButton>
          <ControlButton $w={62}><Svg w={12}><path d="M.5 2.500h9v9h-9zM2.500 2.500v-2h9v9h-2" stroke="#000" /></Svg></ControlButton>
          <ControlButton $w={70}><Svg w={12}><path d="M.5.500l11 11M11.500.500l-11 11" stroke="#000" strokeWidth="1.100" /></Svg></ControlButton>
        </WindowControls>
      </TabStrip>
      <Toolbar>
        <AddressRow>
          <NavButton $w={34}><BackIcon color="#555" /></NavButton>
          <NavButton $w={26}><ForwardIcon color="#c2c2c2" /></NavButton>
          <NavButton $w={32}><ReloadIcon /></NavButton>
          <NavButton $w={25}><HomeIcon /></NavButton>
          <AddressBar>
            <Doc stroke="#888" w={11} h={15} />
            <Host width={69}>localhost</Host>
            <Path width={85}>/index.html</Path>
            <AddressTail><Translate /><StarIcon /></AddressTail>
          </AddressBar>
          {extensions.map((icon, i) => <Extension key={i}>{icon}</Extension>)}
        </AddressRow>
        <BookmarkBar>
          {bookmarks.map((b) => (
            <BookmarkItem key={b.label} $w={b.w} $cjk={b.cjk}>
              <BookmarkIcon $gap={b.gap || 5}>{b.icon}</BookmarkIcon>
              <BookmarkLabel width={b.t}>{b.label}</BookmarkLabel>
            </BookmarkItem>
          ))}
          <Overflow>»</Overflow>
          <Separator />
          <BookmarkItem $w={120} $cjk>
            <BookmarkIcon $gap={6}><FolderIcon /></BookmarkIcon>
            <BookmarkLabel width={91}>其他書籤</BookmarkLabel>
          </BookmarkItem>
        </BookmarkBar>
      </Toolbar>
    </>
  );
}

function GamePage() {
  return (
    <Page>
      <Navbar>
        <Brand><Fit width={272}>SPD4517 Individual Assignment 1</Fit></Brand>
        <NavLink><Fit width={104}>About the Game</Fit></NavLink>
        <NavLink><Fit width={123}>Game Walkthrough</Fit></NavLink>
        <NavLink><Fit width={156}>About the Game Creator</Fit></NavLink>
        <More><i /><i /><i /></More>
      </Navbar>
      <Title>Ghost Leg Game</Title>
      <FormRow>
        <Prompt width={201}>If you want to create a game.....</Prompt>
        <Button>Create New Game</Button>
      </FormRow>
      <FormRow>
        <Prompt width={187} $lift={4}>If you want to join a game......</Prompt>
        <Label width={102}>Enter Game ID:</Label>
        <GameInput />
        <Button>Play</Button>
      </FormRow>
      <Footer><Fit width={198}>© Chan Kwan Wing 14011142S</Fit></Footer>
    </Page>
  );
}

function DesktopTaskbar() {
  return (
    <Taskbar>
      <Wallpaper width="1920" height="50" viewBox="0 0 1920 50">
        <path d="M36 0h39L48 50H2z" fill="#2f311f" />
        <path d="M158 0h62l-20 50h-65z" fill="#2f311f" />
        <path d="M232 0h199v50H208z" fill="#2d2f1f" />
        <path d="M220 0h12l-20 50h-10z" fill="#222320" />
        <path d="M250 0h-10l-22 50h14z" fill="#3a3a30" opacity=".6" />
        <path d="M420 0h12v50h-30z" fill="#3d3d34" opacity=".7" />
        <path d="M611 0h89l-6 50h-83z" fill="#2f3120" />
        <path d="M790 0h18l-24 50h-34z" fill="#22251b" />
        <path d="M832 0h10l28 44-20-14z" fill="#34371f" />
        <path d="M811 0h3l-12 50h-6z" fill="#2c2e25" />
        <path d="M1285 0h120l-10 24-60-8z" fill="#262a1a" />
        <path d="M1425 0h12l-6 26h-18z" fill="#2b2f1c" />
        <path d="M1220 0h40l180 50h-90z" fill="#22241b" />
        <path d="M1450 0h90l200 50h-250z" fill="#20231a" />
        <path d="M1434 10l36 38M1476 30l-8 20" stroke="#444" />
        <path d="M1560 10l130 40h-130z" fill="#20251a" />
      </Wallpaper>
      <TaskCell $w={60}><StartIcon /></TaskCell>
      <TaskCell $w={60}><SearchIcon /></TaskCell>
      <TaskCell $w={60}><TaskViewIcon /></TaskCell>
      <TaskCell $w={64}><KLogo /></TaskCell>
      <TaskCell><KkBox /></TaskCell>
      <TaskCell><EdgeLogo /></TaskCell>
      <TaskCell><Firefox /></TaskCell>
      <TaskCell $active>
        <ChromeLogo size={28} />
        <Overlay $x={33} $y={26}><Mic /></Overlay>
        <Running $l={1} $w={61} />
      </TaskCell>
      <TaskCell><ChromeLogo size={28} /><Overlay $x={31} $y={25}><Person /></Overlay></TaskCell>
      <TaskCell><Safari /></TaskCell>
      <TaskCell><Opera /></TaskCell>
      <TaskCell><Explorer /><Running $l={6} $w={40} /><Running $l={46} $w={11} $dim /></TaskCell>
      <TaskCell><NetBeans /><Running $l={6} $w={51} /></TaskCell>
      <TaskCell><Xampp /><Running $l={6} $w={51} /></TaskCell>
      <TaskCell><Word /><Running $l={6} $w={51} /></TaskCell>
      <Tray>
        {tray.map((icon, i) => <TaskCell key={i} $w={40}>{icon}</TaskCell>)}
        <TaskCell $w={50}><Keyboard /></TaskCell>
        <Ime>繁體</Ime>
        <Clock><span>15:02</span><span>2016/03/12</span></Clock>
        <ShowDesktop />
      </Tray>
    </Taskbar>
  );
}

export default function App() {
  return (
    <Screen>
      <GlobalStyle />
      <BrowserFrame />
      <GamePage />
      <DesktopTaskbar />
    </Screen>
  );
}
